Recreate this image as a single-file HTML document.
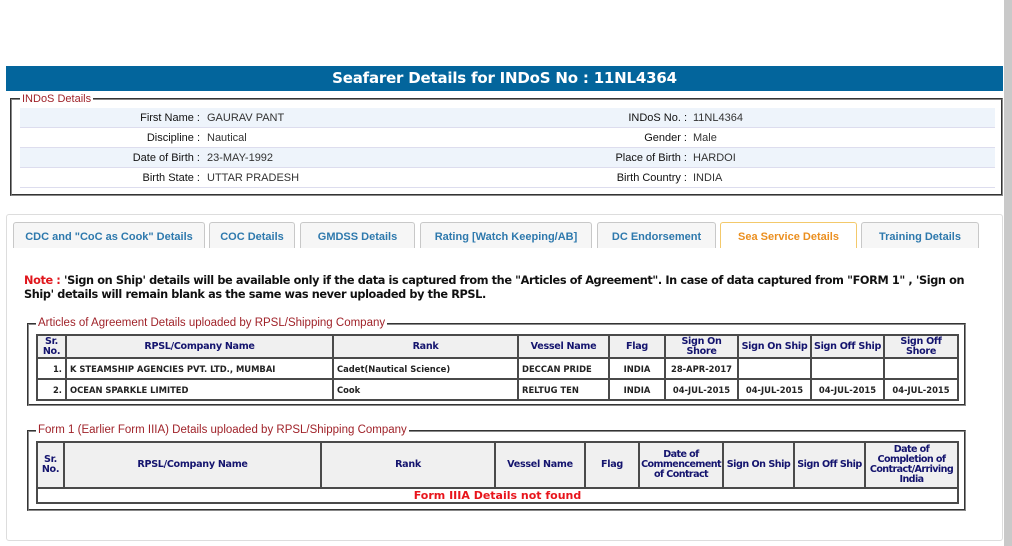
<!DOCTYPE html>
<html><head><meta charset="utf-8"><style>
*{margin:0;padding:0;box-sizing:border-box}
body{width:1012px;height:546px;background:#fff;position:relative;overflow:hidden;font-family:"Liberation Sans",Arial,sans-serif}
.abs{position:absolute}
.sb{left:1004px;top:0;width:8px;height:546px;background:#c9c9c9}
.hdr{left:6px;top:66px;width:997px;height:25px;background:#03659c;color:#fff;font:bold 15px "DejaVu Sans",Verdana,sans-serif;letter-spacing:-0.2px;text-align:center;line-height:25px}
.fs{border:2px groove #c8c8c8;border-color:#888}
.lg{background:#fff;color:#a0232a;font-size:11px;padding:0 2px;line-height:12px}
.row{left:20px;width:975px;height:20px;border-bottom:1px solid #dde;font-size:11px;color:#333;line-height:21px}
.row.b{background:#eef4fb}
.row span{position:absolute;white-space:nowrap}
.l{text-align:right;color:#111}
.tab{top:222px;height:26px;border:1px solid #c8c8c8;border-bottom:none;border-radius:3px 3px 0 0;background:#f6f6f6;color:#2e79ad;font:bold 11px "Liberation Sans",Arial,sans-serif;text-align:center;line-height:28px}
.tab.act{background:#fff;border-color:#f3c96b;color:#eb8f1f}
.note{left:24px;top:274px;font:bold 11.3px "DejaVu Sans",Verdana,sans-serif;letter-spacing:-0.38px;color:#111;line-height:13.5px;white-space:nowrap}
table{position:absolute;border-collapse:collapse;table-layout:fixed;font-family:"DejaVu Sans",Verdana,sans-serif;font-weight:bold}
td,th{border:2px solid #4a4a4a;font-size:8.4px;padding:0 3px;overflow:hidden;white-space:nowrap}
th{background:#f0f0f0;color:#14146e;font-size:9.6px;line-height:10px;text-align:center;white-space:nowrap;padding:0;letter-spacing:-0.3px}
td{color:#222;height:21px}
</style></head><body>
<div class="abs sb"></div>
<div class="abs hdr">Seafarer Details for INDoS No : 11NL4364</div>

<div class="abs fs" style="left:10px;top:98px;width:993px;height:98px"></div>
<div class="abs lg" style="left:20px;top:93px">INDoS Details</div>
<div class="abs row b" style="top:108px"><span class="l" style="right:795px">First Name :</span><span style="left:187px">GAURAV PANT</span><span class="l" style="right:308px">INDoS No. :</span><span style="left:673px">11NL4364</span></div>
<div class="abs row" style="top:128px"><span class="l" style="right:795px">Discipline :</span><span style="left:187px">Nautical</span><span class="l" style="right:308px">Gender :</span><span style="left:673px">Male</span></div>
<div class="abs row b" style="top:148px"><span class="l" style="right:795px">Date of Birth :</span><span style="left:187px">23-MAY-1992</span><span class="l" style="right:308px">Place of Birth :</span><span style="left:673px">HARDOI</span></div>
<div class="abs row" style="top:168px"><span class="l" style="right:795px">Birth State :</span><span style="left:187px">UTTAR PRADESH</span><span class="l" style="right:308px">Birth Country :</span><span style="left:673px">INDIA</span></div>

<div class="abs" style="left:6px;top:214px;width:997px;height:327px;border:1px solid #ddd;border-radius:3px"></div>
<div class="abs tab" style="left:13px;width:192px">CDC and "CoC as Cook" Details</div>
<div class="abs tab" style="left:209px;width:86px">COC Details</div>
<div class="abs tab" style="left:300px;width:115px">GMDSS Details</div>
<div class="abs tab" style="left:420px;width:172px">Rating [Watch Keeping/AB]</div>
<div class="abs tab" style="left:597px;width:119px">DC Endorsement</div>
<div class="abs tab act" style="left:720px;width:137px">Sea Service Details</div>
<div class="abs tab" style="left:861px;width:118px">Training Details</div>

<div class="abs note"><span style="color:#e0161c">Note :</span> 'Sign on Ship' details will be available only if the data is captured from the "Articles of Agreement". In case of data captured from "FORM 1" , 'Sign on<br>Ship' details will remain blank as the same was never uploaded by the RPSL.</div>

<div class="abs fs" style="left:27px;top:323px;width:939px;height:83px"></div>
<div class="abs lg" style="left:36px;top:317px;font-size:11.5px">Articles of Agreement Details uploaded by RPSL/Shipping Company</div>
<table style="left:36px;top:334px;width:921px">
<colgroup><col style="width:29px"><col style="width:267px"><col style="width:185px"><col style="width:91px"><col style="width:56px"><col style="width:73px"><col style="width:73px"><col style="width:73px"><col style="width:74px"></colgroup>
<tr style="height:23px"><th>Sr.<br>No.</th><th>RPSL/Company Name</th><th>Rank</th><th>Vessel Name</th><th>Flag</th><th>Sign On<br>Shore</th><th>Sign On Ship</th><th>Sign Off Ship</th><th>Sign Off<br>Shore</th></tr>
<tr style="height:20px"><td style="text-align:right">1.</td><td>K STEAMSHIP AGENCIES PVT. LTD., MUMBAI</td><td>Cadet(Nautical Science)</td><td>DECCAN PRIDE</td><td style="text-align:center">INDIA</td><td style="text-align:center">28-APR-2017</td><td></td><td></td><td></td></tr>
<tr><td style="text-align:right">2.</td><td>OCEAN SPARKLE LIMITED</td><td>Cook</td><td>RELTUG TEN</td><td style="text-align:center">INDIA</td><td style="text-align:center">04-JUL-2015</td><td style="text-align:center">04-JUL-2015</td><td style="text-align:center">04-JUL-2015</td><td style="text-align:center">04-JUL-2015</td></tr>
</table>

<div class="abs fs" style="left:27px;top:430px;width:939px;height:81px"></div>
<div class="abs lg" style="left:36px;top:424px;font-size:11.5px">Form 1 (Earlier Form IIIA) Details uploaded by RPSL/Shipping Company</div>
<table style="left:36px;top:441px;width:921px">
<colgroup><col style="width:27px"><col style="width:257px"><col style="width:174px"><col style="width:90px"><col style="width:54px"><col style="width:84px"><col style="width:71px"><col style="width:71px"><col style="width:93px"></colgroup>
<tr style="height:46px"><th>Sr.<br>No.</th><th>RPSL/Company Name</th><th>Rank</th><th>Vessel Name</th><th>Flag</th><th style="letter-spacing:-0.6px">Date of<br>Commencement<br>of Contract</th><th style="letter-spacing:-0.5px">Sign On Ship</th><th style="letter-spacing:-0.5px">Sign Off Ship</th><th style="letter-spacing:-0.6px">Date of<br>Completion of<br>Contract/Arriving<br>India</th></tr>
<tr><td colspan="9" style="text-align:center;color:#e8141b;font-size:11px;height:15px;line-height:11px">Form IIIA Details not found</td></tr>
</table>
</body></html>
